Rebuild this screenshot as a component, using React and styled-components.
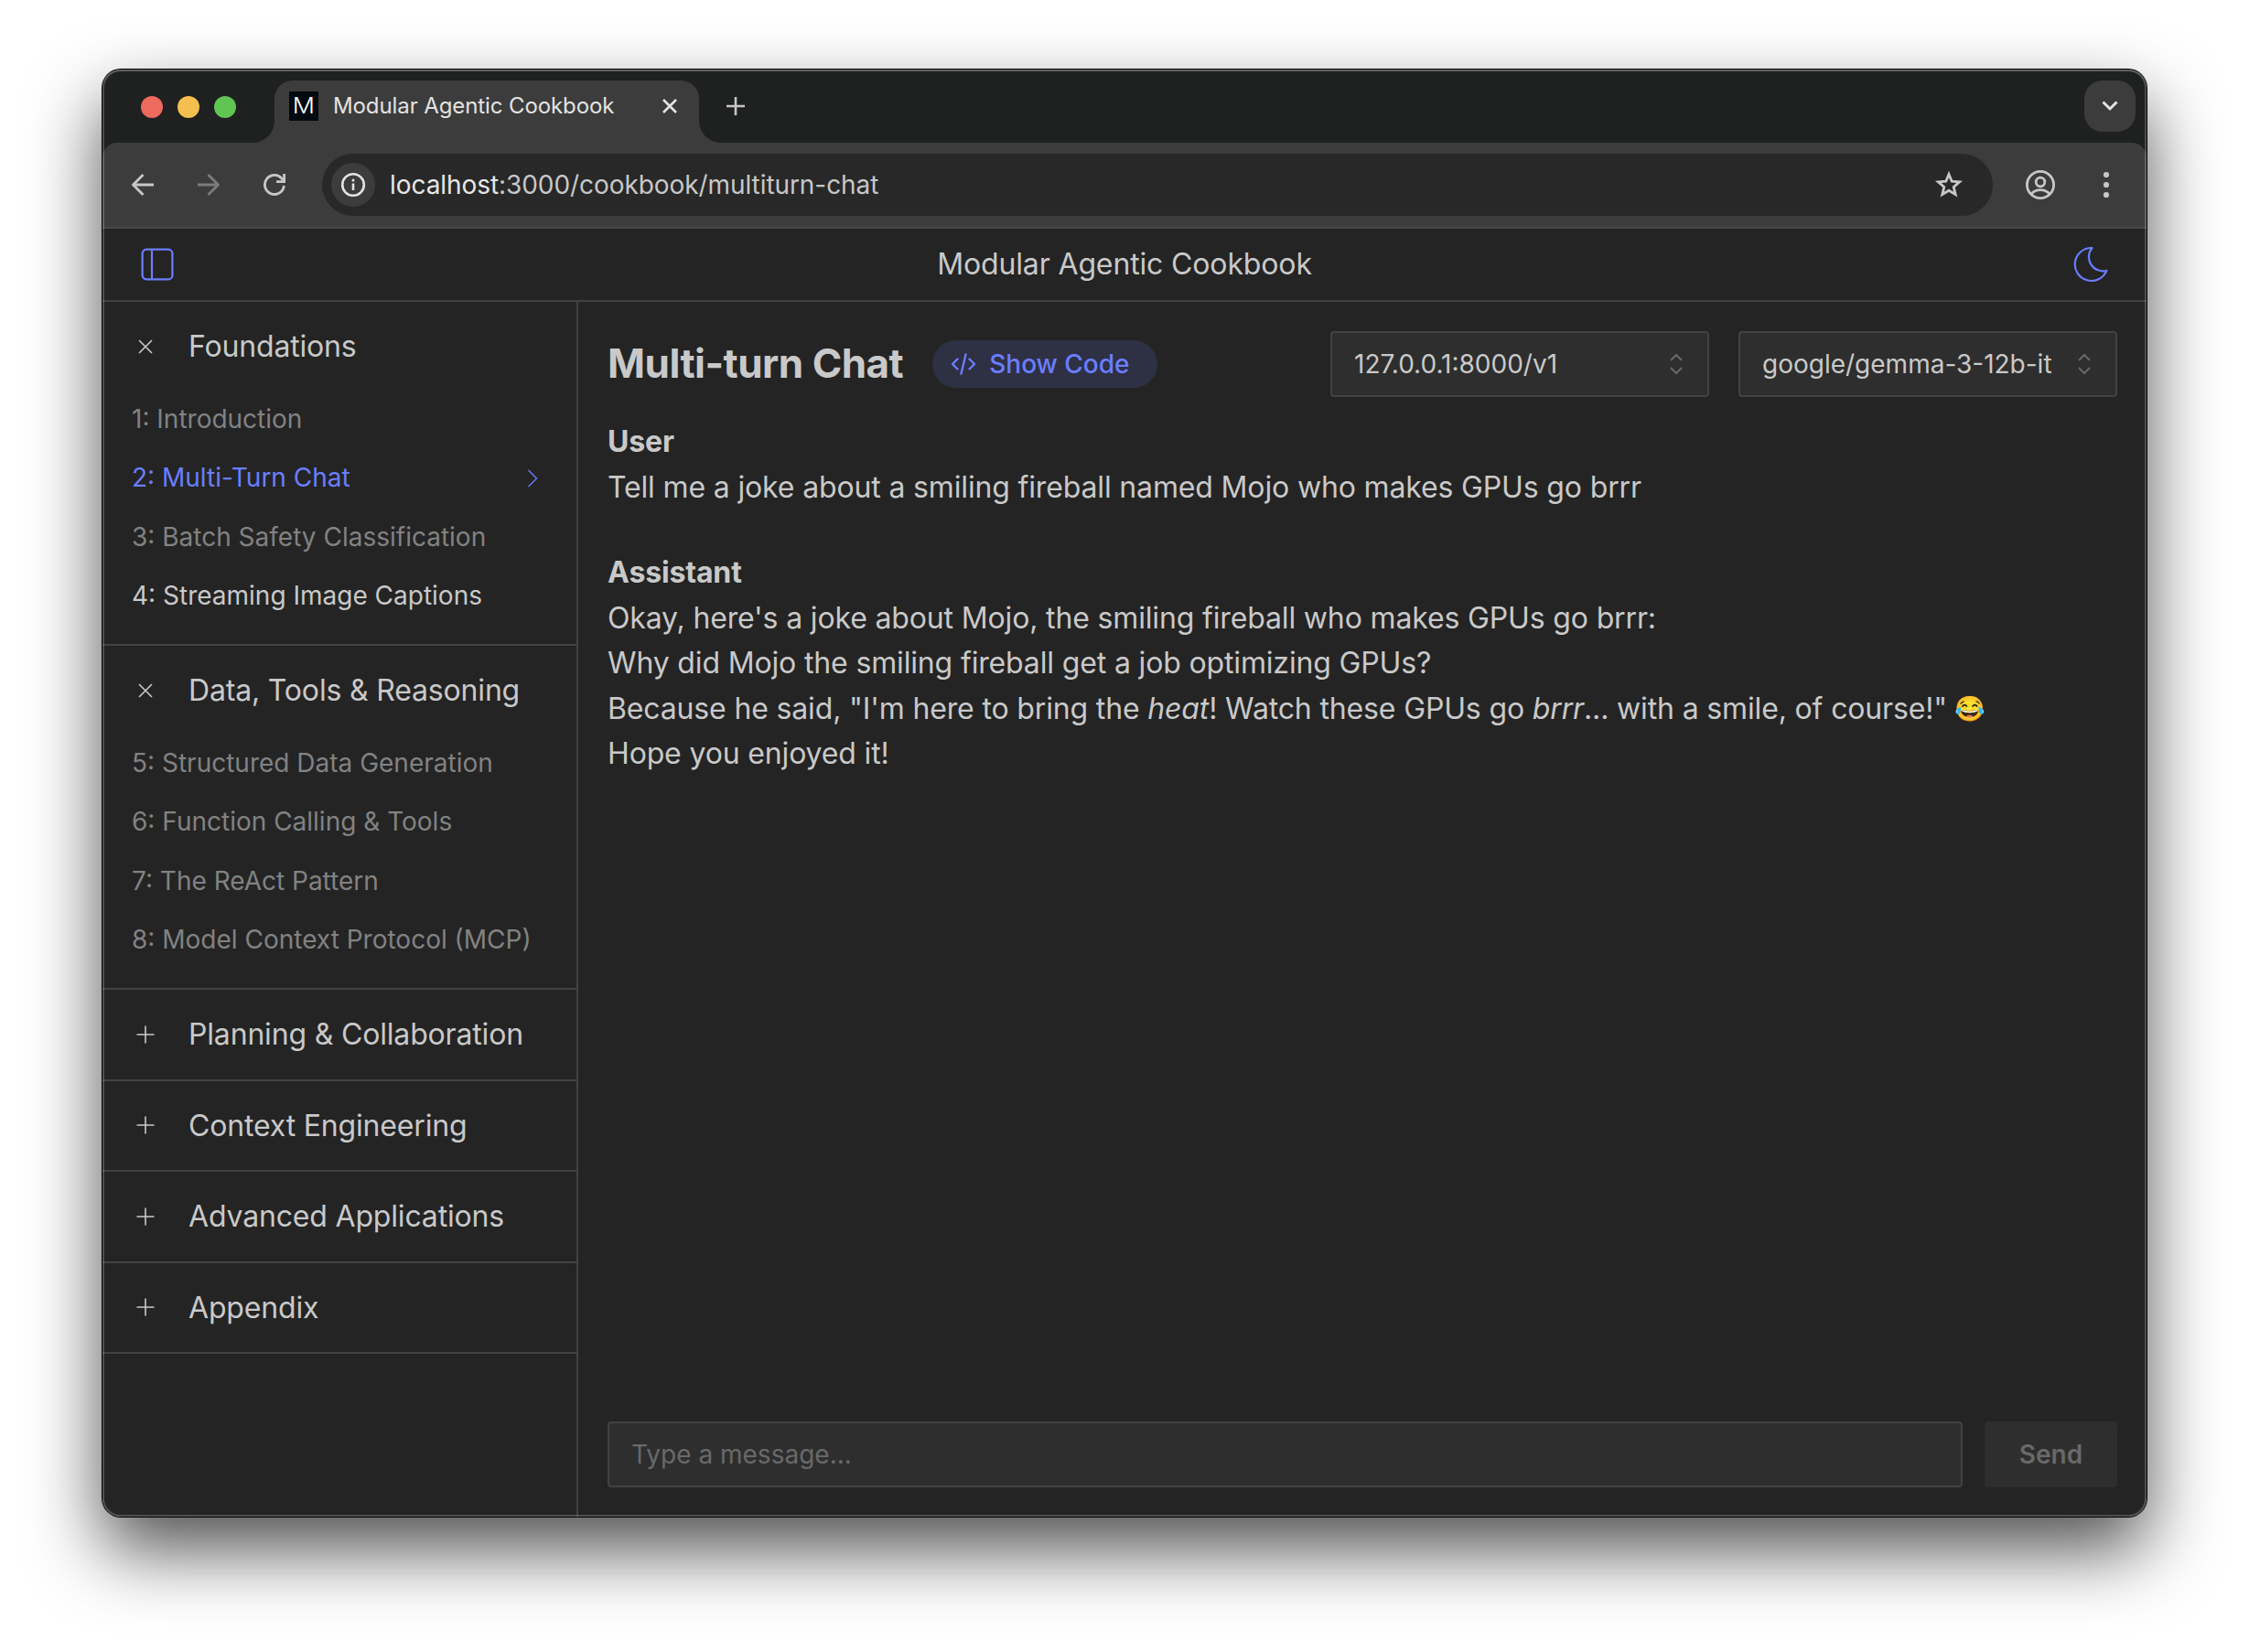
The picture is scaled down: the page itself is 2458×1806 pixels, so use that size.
import React from "react";
import styled, { createGlobalStyle, css } from "styled-components";

const c = {
  bg: "#242424",
  field: "#2e2e2e",
  line: "#424242",
  text: "#c9c9c9",
  dim: "#828282",
  mute: "#696969",
  accent: "#6a7eff",
  chrome: "#3c3c3c",
  strip: "#1f2120",
};

const Global = createGlobalStyle`
  * { box-sizing: border-box; }
  body {
    margin: 0;
    background: #fff;
    color: ${c.text};
    font-family: Inter, "Liberation Sans", sans-serif;
    font-size: 32px;
    line-height: 1.55;
  }
  button, input { font: inherit; color: inherit; margin: 0; border: 0; padding: 0; background: none; }
  svg { display: block; flex: none; }
`;

const Desktop = styled.div`
  height: 1806px;
  padding: 76px 112px 148px;
  overflow: hidden;
`;

const Window = styled.div`
  position: relative;
  display: flex;
  flex-direction: column;
  height: 1582px;
  border-radius: 20px;
  overflow: hidden;
  background: ${c.bg};
`;

const WindowShadow = styled.div`
  border-radius: 20px;
  box-shadow: 0 0 0 1px #000, 0 36px 80px rgba(0, 0, 0, 0.69);
`;

/* hairline highlight that macOS draws just inside the window frame */
const Rim = styled.div`
  position: absolute;
  inset: 0;
  border-radius: 20px;
  pointer-events: none;
  box-shadow: inset 0 0 0 2px rgba(255, 255, 255, 0.2), inset 0 2px 0 rgba(255, 255, 255, 0.12);
`;

const TabStrip = styled.div`
  display: flex;
  align-items: flex-start;
  height: 80px;
  flex: none;
  padding: 12px 12px 0 42px;
  background: ${c.strip};
`;

const Lights = styled.div`
  display: flex;
  gap: 16px;
  padding-top: 17px;
  width: 146px;
`;

const Light = styled.span`
  width: 24px;
  height: 24px;
  border-radius: 50%;
  background: ${(p) => p.$color};
`;

const Tab = styled.div`
  position: relative;
  display: flex;
  align-items: center;
  width: 464px;
  height: 68px;
  padding: 0 22px 12px 16px;
  border-radius: 20px 20px 0 0;
  background: ${c.chrome};

  &::before,
  &::after {
    content: "";
    position: absolute;
    bottom: 0;
    width: 24px;
    height: 24px;
  }
  &::before {
    left: -24px;
    background: radial-gradient(circle at 0 0, transparent 23.5px, ${c.chrome} 24.5px);
  }
  &::after {
    right: -24px;
    background: radial-gradient(circle at 100% 0, transparent 23.5px, ${c.chrome} 24.5px);
  }
`;

const Favicon = styled.span`
  display: flex;
  align-items: center;
  justify-content: center;
  width: 32px;
  height: 32px;
  background: #020a10;
  color: #fff;
  font-size: 24px;
  font-weight: 300;
  line-height: 32px;

  span { transform: scaleX(1.12); }
`;

const TabTitle = styled.span`
  flex: 1;
  margin-left: 16px;
  color: #e3e3e3;
  font-size: 24px;
  line-height: 32px;
  letter-spacing: -0.1px;
  white-space: nowrap;
`;

const NewTab = styled.button`
  display: flex;
  padding: 18px 0 0 30px;
  flex: 1;
`;

const TabSearch = styled.button`
  display: flex;
  align-items: center;
  justify-content: center;
  width: 56px;
  height: 56px;
  border-radius: 20px;
  background: ${c.chrome};
`;

const ToolbarWrap = styled.div`
  flex: none;
  background: ${c.strip};
`;

const Toolbar = styled.div`
  display: flex;
  align-items: center;
  height: 94px;
  padding: 0 38px 0 32px;
  border-bottom: 2px solid #484848;
  border-radius: 16px 16px 0 0;
  background: ${c.chrome};
`;

const NavButton = styled.button`
  display: flex;
  width: 24px;
  margin-right: ${(p) => p.$gap || 48}px;
`;

const Omnibox = styled.div`
  display: flex;
  align-items: center;
  flex: 1;
  height: 68px;
  padding: 0 32px 0 10px;
  border-radius: 34px;
  background: #282828;
`;

const SiteInfo = styled.span`
  display: flex;
  align-items: center;
  justify-content: center;
  width: 48px;
  height: 48px;
  border-radius: 50%;
  background: ${c.chrome};
`;

const Url = styled.span`
  flex: 1;
  margin-left: 16px;
  color: #c7c7c7;
  font-size: 28px;
  line-height: 40px;
  letter-spacing: -0.07px;
  white-space: nowrap;

  b { color: #e6e6e6; font-weight: 400; }
`;

const ChromeActions = styled.div`
  display: flex;
  align-items: center;
  gap: 50px;
  margin-left: 36px;
`;

const AppHeader = styled.header`
  display: grid;
  grid-template-columns: 1fr auto 1fr;
  align-items: center;
  flex: none;
  height: 80px;
  padding: 0 41px;
  border-bottom: 2px solid ${c.line};

  & > :last-child { justify-self: end; }
`;

const AppTitle = styled.div`
  line-height: 50px;
  letter-spacing: -0.14px;
`;

const AppBody = styled.div`
  display: flex;
  flex: 1;
  min-height: 0;
`;

const Sidebar = styled.nav`
  width: 520px;
  flex: none;
  border-right: 2px solid ${c.line};
`;

const Section = styled.section`
  border-bottom: 2px solid ${c.line};
`;

const SectionHeader = styled.button`
  display: flex;
  align-items: center;
  width: 100%;
  height: 97.5px;
  padding: 0 32px 0 36px;
  letter-spacing: -0.17px;
  text-align: left;
  white-space: nowrap;

  svg { margin-right: 36px; }
`;

const Lessons = styled.div`
  margin-top: -1px;
  padding: 0 32px 20px;
`;

const Lesson = styled.a`
  display: flex;
  align-items: center;
  justify-content: space-between;
  height: 64.4px;
  padding-right: 10px;
  font-size: 28px;
  white-space: nowrap;
  color: ${(p) => (p.$state === "active" ? c.accent : p.$state === "open" ? c.text : c.dim)};
`;

const Main = styled.main`
  display: flex;
  flex-direction: column;
  flex: 1;
  padding: 32px;
`;

const RecipeBar = styled.div`
  display: flex;
  align-items: center;
  height: 72px;
`;

const RecipeTitle = styled.h1`
  margin: 0;
  padding-bottom: 2px;
  font-size: 44px;
  font-weight: 700;
  line-height: 60px;
  letter-spacing: -0.5px;
  white-space: nowrap;
`;

const CodeButton = styled.button`
  display: flex;
  align-items: center;
  height: 52px;
  margin-left: 32px;
  padding: 0 30px 0 20px;
  border-radius: 26px;
  background: #2e3044;
  color: ${c.accent};
  font-size: 28px;
  font-weight: 500;
  white-space: nowrap;

  svg { margin-right: 14px; }
`;

const ButtonLabel = styled.span`
  padding-top: 2px;
`;

const Selects = styled.div`
  display: flex;
  gap: 32px;
  margin-left: auto;
`;

const fieldBox = css`
  height: 72px;
  border: 2px solid ${c.line};
  border-radius: 4px;
  background: ${c.field};
  font-size: 28px;
`;

const Select = styled.button`
  ${fieldBox}
  display: flex;
  align-items: center;
  justify-content: space-between;
  width: 414px;
  padding: 0 27px 0 24px;
  white-space: nowrap;
`;

const Chat = styled.div`
  flex: 1;
  padding-top: 24.3px;
  letter-spacing: -0.15px;
`;

const Message = styled.div`
  margin-bottom: 43.6px;

  p { margin: 0; white-space: nowrap; }
`;

const Author = styled.div`
  font-weight: 700;
`;

const Emoji = styled.span`
  margin-left: -1px;
  font-size: 27px;
  line-height: 1;
  vertical-align: 2px;
`;

const Composer = styled.form`
  display: flex;
  gap: 24px;
`;

const MessageInput = styled.input`
  &&& {
    ${fieldBox}
    flex: 1;
    padding: 0 24px;
  }
  &::placeholder { color: ${c.mute}; opacity: 1; }
`;

const SendButton = styled.button`
  width: 145px;
  height: 72px;
  padding-top: 2px;
  border-radius: 4px;
  background: ${c.field};
  color: ${c.mute};
  font-size: 28px;
  font-weight: 600;
`;

const Icon = ({ w, h = w, color = c.text, sw = 2, children }) => (
  <svg width={w} height={h} viewBox={`0 0 ${w} ${h}`} fill="none" stroke={color} strokeWidth={sw}>
    {children}
  </svg>
);

const ArrowIcon = ({ flip, color }) => (
  <Icon w={24} color={color} sw={2.8}>
    <path d={flip ? "M0 12H22M11.5 1L22.5 12L11.5 23" : "M24 12H2M12.5 1L1.5 12L12.5 23"} />
  </Icon>
);

const ToggleIcon = ({ open }) => (
  <Icon w={22} sw={1.6}>
    <path d={open ? "M4 4L18 18M18 4L4 18" : "M1.5 11H20.5M11 1.5V20.5"} />
  </Icon>
);

const Sorter = () => (
  <Icon w={14} h={24} color={c.mute} sw={2}>
    <path d="M1 8L7 2L13 8M1 16L7 22L13 16" />
  </Icon>
);

const sections = [
  {
    title: "Foundations",
    items: [
      ["1: Introduction"],
      ["2: Multi-Turn Chat", "active"],
      ["3: Batch Safety Classification"],
      ["4: Streaming Image Captions", "open"],
    ],
  },
  {
    title: "Data, Tools & Reasoning",
    items: [
      ["5: Structured Data Generation"],
      ["6: Function Calling & Tools"],
      ["7: The ReAct Pattern"],
      ["8: Model Context Protocol (MCP)"],
    ],
  },
  { title: "Planning & Collaboration" },
  { title: "Context Engineering" },
  { title: "Advanced Applications" },
  { title: "Appendix" },
];

function BrowserChrome() {
  return (
    <>
      <TabStrip>
        <Lights>
          <Light $color="#ec6a5e" />
          <Light $color="#f4bf4f" />
          <Light $color="#61c554" />
        </Lights>
        <Tab>
          <Favicon><span>M</span></Favicon>
          <TabTitle>Modular Agentic Cookbook</TabTitle>
          <Icon w={20} color="#e3e3e3" sw={2.6}>
            <path d="M3 3L17 17M17 3L3 17" />
          </Icon>
        </Tab>
        <NewTab>
          <Icon w={20} color="#c7c7c7" sw={2.6}>
            <path d="M0 10H20M10 0V20" />
          </Icon>
        </NewTab>
        <TabSearch>
          <Icon w={18} h={12} color="#e3e3e3" sw={3}>
            <path d="M1.5 1.5L9 9L16.5 1.5" />
          </Icon>
        </TabSearch>
      </TabStrip>
      <ToolbarWrap>
        <Toolbar>
          <NavButton><ArrowIcon color="#c7c7c7" /></NavButton>
          <NavButton><ArrowIcon flip color="#7b7b7b" /></NavButton>
          <NavButton $gap={40}>
            <Icon w={24} color="#c7c7c7" sw={2.8}>
              <path d="M22.4 13A10.5 10.5 0 1 1 19.8 5L22 8" />
              <path d="M22.6 0V8.6H14" />
            </Icon>
          </NavButton>
          <Omnibox>
            <SiteInfo>
              <Icon w={28} color="#e3e3e3" sw={2.6}>
                <circle cx="14" cy="14" r="11.8" />
                <path d="M14 12.5V20M14 7.8V10.4" />
              </Icon>
            </SiteInfo>
            <Url><b>localhost</b>:3000/cookbook/multiturn-chat</Url>
            <Icon w={32} color="#c7c7c7" sw={2.8}>
              <path d="M16 4.5L19.2 12.2L27.6 12.9L21.2 18.4L23.2 26.6L16 22.2L8.8 26.6L10.8 18.4L4.4 12.9L12.8 12.2Z" />
            </Icon>
          </Omnibox>
          <ChromeActions>
            <Icon w={32} color="#c7c7c7" sw={2.8}>
              <circle cx="16" cy="16" r="14.6" />
              <circle cx="16" cy="13" r="4.8" />
              <path d="M6 26C9 22.5 12.5 21.6 16 21.6S23 22.5 26 26" />
            </Icon>
            <svg width="12" height="32" viewBox="0 0 12 32" fill="#c7c7c7">
              <circle cx="6" cy="5" r="3.1" />
              <circle cx="6" cy="16" r="3.1" />
              <circle cx="6" cy="27" r="3.1" />
            </svg>
          </ChromeActions>
        </Toolbar>
      </ToolbarWrap>
    </>
  );
}

export default function App() {
  return (
    <Desktop>
      <Global />
      <WindowShadow>
        <Window>
          <BrowserChrome />
          <AppHeader>
            <Icon w={38} color={c.accent} sw={2.2}>
              <rect x="2.6" y="2.6" width="32.8" height="32.8" rx="4.5" />
              <path d="M13 2.6V35.4" />
            </Icon>
            <AppTitle>Modular Agentic Cookbook</AppTitle>
            <Icon w={40} color={c.accent} sw={2.2}>
              <path strokeLinejoin="round" d="M21.6 2A18 18 0 1 0 37.4 26.8A15.4 15.4 0 0 1 21.6 2Z" />
            </Icon>
          </AppHeader>
          <AppBody>
            <Sidebar>
              {sections.map((s) => (
                <Section key={s.title}>
                  <SectionHeader>
                    <ToggleIcon open={!!s.items} />
                    {s.title}
                  </SectionHeader>
                  {s.items && (
                    <Lessons>
                      {s.items.map(([label, state]) => (
                        <Lesson key={label} $state={state}>
                          {label}
                          {state === "active" && (
                            <Icon w={12} h={20} color={c.accent} sw={1.4}>
                              <path d="M1.5 1L10.5 10L1.5 19" />
                            </Icon>
                          )}
                        </Lesson>
                      ))}
                    </Lessons>
                  )}
                </Section>
              ))}
            </Sidebar>
            <Main>
              <RecipeBar>
                <RecipeTitle>Multi-turn Chat</RecipeTitle>
                <CodeButton>
                  <Icon w={28} h={24} color={c.accent} sw={2.4}>
                    <path strokeLinecap="round" strokeLinejoin="round" d="M7.5 6.5L2 12L7.5 17.5M20.5 6.5L26 12L20.5 17.5M16.5 1.5L11.5 22.5" />
                  </Icon>
                  <ButtonLabel>Show Code</ButtonLabel>
                </CodeButton>
                <Selects>
                  <Select><ButtonLabel>127.0.0.1:8000/v1</ButtonLabel><Sorter /></Select>
                  <Select><ButtonLabel>google/gemma-3-12b-it</ButtonLabel><Sorter /></Select>
                </Selects>
              </RecipeBar>
              <Chat>
                <Message>
                  <Author>User</Author>
                  <p>Tell me a joke about a smiling fireball named Mojo who makes GPUs go brrr</p>
                </Message>
                <Message>
                  <Author>Assistant</Author>
                  <p>Okay, here's a joke about Mojo, the smiling fireball who makes GPUs go brrr:</p>
                  <p>Why did Mojo the smiling fireball get a job optimizing GPUs?</p>
                  <p>
                    Because he said, "I'm here to bring the <em>heat</em>! Watch these GPUs go{" "}
                    <em>brrr</em>... with a smile, of course!" <Emoji>😂</Emoji>
                  </p>
                  <p>Hope you enjoyed it!</p>
                </Message>
              </Chat>
              <Composer>
                <MessageInput placeholder="Type a message..." />
                <SendButton type="button">Send</SendButton>
              </Composer>
            </Main>
          </AppBody>
          <Rim />
        </Window>
      </WindowShadow>
    </Desktop>
  );
}
